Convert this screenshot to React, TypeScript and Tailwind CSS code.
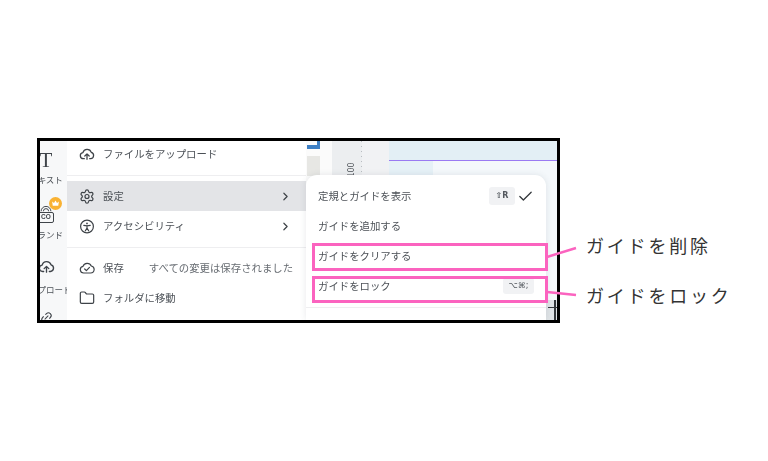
import React from "react";
import { ChevronRight, Check, Folder, Link2, Settings } from "lucide-react";

const CloudUp = ({ className = "" }: { className?: string }) => (
  <svg viewBox="0 0 24 24" className={className} fill="none" stroke="currentColor" strokeWidth={1.9} strokeLinecap="round" strokeLinejoin="round">
    <path d="M8 19H6.500a4.500 4.500 0 0 1-.6-8.960A6.500 6.500 0 0 1 18.400 9.600 4.800 4.800 0 0 1 17.500 19H16" />
    <path d="M12 20v-8M8.700 15 12 11.800l3.300 3.200" />
  </svg>
);

const CloudOk = ({ className = "" }: { className?: string }) => (
  <svg viewBox="0 0 24 24" className={className} fill="none" stroke="currentColor" strokeWidth={1.8} strokeLinecap="round" strokeLinejoin="round">
    <path d="M7 19.500a5 5 0 0 1-1-9.900A6.600 6.600 0 0 1 18.400 9 5.300 5.300 0 0 1 17.500 19.500Z" />
    <path d="m8.500 13.500 2.600 2.500 4.600-5" />
  </svg>
);

const A11y = ({ className = "" }: { className?: string }) => (
  <svg viewBox="0 0 24 24" className={className} fill="none" stroke="currentColor" strokeWidth={1.8} strokeLinecap="round" strokeLinejoin="round">
    <circle cx="12" cy="12" r="9.600" />
    <circle cx="12" cy="7.400" r="1.300" fill="currentColor" stroke="none" />
    <path d="M7.200 10.200c3.200.9 6.400.9 9.600 0M12 10.800v3.400M12 14.200l-2.400 4.200M12 14.200l2.400 4.200" />
  </svg>
);

const Brand = () => (
  <div className="relative flex h-[18px] w-[17px] flex-col items-center justify-end">
    <svg viewBox="0 0 16 7" className="h-[6px] w-[12px] text-[#3f444a]" fill="none" stroke="currentColor" strokeWidth={1.300}>
      <path d="M4.500 6.500a3.500 3.500 0 0 1 7 0" />
      <path d="M1.500 6.500a6.500 6.500 0 0 1 13 0" />
    </svg>
    <span className="flex h-[11px] w-[17px] items-center justify-center rounded-[2px] border border-[#3f444a] font-['Liberation_Sans',sans-serif] text-[6.500px] font-bold leading-none text-[#3f444a]">CO</span>
  </div>
);

const Crown = () => (
  <span className="absolute left-[12px] top-[-8px] flex h-[13px] w-[13px] items-center justify-center rounded-full bg-[#f9b233]">
    <svg viewBox="0 0 12 12" className="h-[9px] w-[9px]" fill="#ffffff">
      <path d="M1.500 3.200 4 5.400 6 2l2 3.400 2.500-2.200-.8 5.800H2.300Z" />
    </svg>
  </span>
);

const Row = ({ icon, label, extra, chevron, active }: { icon: React.ReactNode; label: string; extra?: string; chevron?: boolean; active?: boolean }) => (
  <div className={`flex h-[30px] items-center pl-[12px] pr-[14px] ${active ? "bg-[#e3e4e7]" : ""}`}>
    <span className="flex w-[16px] items-center justify-center text-[#3e4348]">{icon}</span>
    <span className="ml-[8px] whitespace-nowrap text-[10.400px] text-[#4b5056]">{label}</span>
    {extra && <span className="ml-[25px] whitespace-nowrap text-[10.400px] text-[#676c72]">{extra}</span>}
    {chevron && <ChevronRight className="ml-auto h-[13px] w-[13px] text-[#3e4348]" strokeWidth={2.200} />}
  </div>
);

const Kbd = ({ children, className = "" }: { children: React.ReactNode; className?: string }) => (
  <span className={`flex items-center justify-center rounded-[3px] bg-[#f1f2f4] font-['DejaVu_Sans',sans-serif] text-[8px] text-[#53585e] ${className}`}>{children}</span>
);

const SubRow = ({ label, children }: { label: string; children?: React.ReactNode }) => (
  <div className="flex h-[30px] items-center pl-[12px] pr-[12px]">
    <span className="whitespace-nowrap text-[10.400px] text-[#4b5056]">{label}</span>
    {children}
  </div>
);

const SideItem = ({ icon, label, labelGap }: { icon: React.ReactNode; label: string; labelGap: string }) => (
  <div className="flex flex-col items-center">
    <div className="relative flex h-[22px] items-center justify-center">{icon}</div>
    <span className={`${labelGap} whitespace-nowrap text-[8.500px] leading-[12px] text-[#4d5258]`}>{label}</span>
  </div>
);

export default function App() {
  return (
    <div className="relative h-[461px] w-[768px] overflow-hidden bg-white pl-[37px] pt-[138px] font-['Noto_Sans_CJK_JP','Liberation_Sans',sans-serif]">
      <div className="flex h-[185px] w-[523px] overflow-hidden border-[3px] border-black bg-white blur-[0.5px]">
        {/* left rail */}
        <div className="w-[27px] shrink-0 overflow-hidden bg-[#f7f8f9]">
          <div className="ml-[-14px] flex w-[40px] flex-col items-center pt-[8px] text-[#3f444a]">
            <SideItem labelGap="mt-[2px]" icon={<span className="font-['Liberation_Serif',serif] text-[21px] leading-none">T</span>} label="テキスト" />
            <div className="mt-[15px]">
              <SideItem labelGap="mt-[6px]" icon={<div className="relative mt-[6px]"><Brand /><Crown /></div>} label="ブランド" />
            </div>
            <div className="mt-[15px]">
              <SideItem labelGap="mt-[6px]" icon={<CloudUp className="h-[17px] w-[17px]" />} label="アップロード" />
            </div>
            <Link2 className="mt-[16px] h-[13px] w-[13px] -rotate-45" />
          </div>
        </div>

        {/* main menu */}
        <div className="mt-[-2px] w-[239px] shrink-0 bg-white">
          <Row icon={<CloudUp className="h-[18px] w-[18px]" />} label="ファイルをアップロード" />
          <div className="mt-[6px] h-px bg-[#eeeef0]" />
          <div className="mt-[5px]">
            <Row active chevron icon={<Settings className="h-[17px] w-[17px]" strokeWidth={1.800} />} label="設定" />
            <Row chevron icon={<A11y className="h-[17px] w-[17px]" />} label="アクセシビリティ" />
          </div>
          <div className="mt-[6px] h-px bg-[#eeeef0]" />
          <div className="mt-[5px]">
            <Row icon={<CloudOk className="h-[18px] w-[18px]" />} label="保存" extra="すべての変更は保存されました" />
            <Row icon={<Folder className="h-[16px] w-[16px]" strokeWidth={1.800} />} label="フォルダに移動" />
          </div>
        </div>

        {/* canvas behind the submenu */}
        <div className="relative flex min-w-0 flex-1">
          <div className="w-[26px] shrink-0 bg-[#fbfbfb] pl-px">
            <div className="h-[8px] w-[13px] border-b-[4px] border-r-[3px] border-[#3d7fc4]" />
            <div className="mt-[7px] h-[20px] w-[13px] bg-[#e7e7e4]" />
          </div>
          <div className="flex w-[57px] shrink-0 bg-[#eceef0]">
            <div className="flex h-[34px] w-[29px] items-end justify-end pr-[4px]">
              <span className="mr-[-1px] -rotate-90 text-[9px] leading-[10px] text-[#4a4f55]">100</span>
            </div>
            <div className="h-[34px] w-px bg-[repeating-linear-gradient(to_bottom,#b9bcc1_0,#b9bcc1_1px,transparent_1px,transparent_5px)]" />
            <div className="flex-1 bg-[#f1f2f4]" />
          </div>
          <div className="flex min-w-0 flex-1 flex-col">
            <div className="h-[19px] bg-[#e3eff5]" />
            <div className="h-px bg-[#9a7af2]" />
            <div className="flex flex-1">
              <div className="w-[44px] bg-[#e6f1f7]" />
              <div className="flex-1 bg-[#f4f8fb]" />
            </div>
          </div>

          {/* plus cursor in the corner */}
          <div className="absolute bottom-0 right-0 h-[20px] w-[11px] bg-[#dfe3e6]">
            <div className="absolute left-[2px] top-[7px] h-px w-[9px] bg-[#33373b]" />
            <div className="absolute left-[8px] top-0 h-[20px] w-[2px] bg-[#33373b]" />
          </div>

          {/* submenu */}
          <div className="absolute bottom-0 left-0 right-[11px] top-[34px] rounded-t-[11px] bg-white pt-[6px] shadow-[0_0_6px_rgba(60,70,80,0.12)]">
            <SubRow label="定規とガイドを表示">
              <Kbd className="ml-auto h-[18px] w-[26px] font-bold">⇧R</Kbd>
              <Check className="ml-[2px] h-[17px] w-[17px] text-[#33373b]" strokeWidth={1.800} />
            </SubRow>
            <SubRow label="ガイドを追加する" />
            <SubRow label="ガイドをクリアする" />
            <SubRow label="ガイドをロック">
              <Kbd className="ml-auto h-[16px] w-[31px]">⌥⌘;</Kbd>
            </SubRow>
            <div className="mt-[6px] h-px bg-[#eeeef0]" />
          </div>
        </div>
      </div>

      {/* annotations */}
      <div className="absolute left-[312px] top-[243px] h-[28px] w-[236px] border-[3px] border-[#fb63bf]" />
      <div className="absolute left-[312px] top-[276px] h-[27px] w-[236px] border-[3px] border-[#fb63bf]" />
      <svg className="absolute left-[545px] top-[240px] h-[64px] w-[36px]" viewBox="0 0 36 64" fill="none" stroke="#fb63bf" strokeWidth={2.400}>
        <path d="M2 17 31 8M2 52 31 55" />
      </svg>
      <div className="absolute left-[586px] top-[231px] whitespace-nowrap text-[18px] leading-[28px] tracking-[2.800px] text-[#333333]">ガイドを削除</div>
      <div className="absolute left-[586px] top-[281px] whitespace-nowrap text-[18px] leading-[28px] tracking-[2.800px] text-[#333333]">ガイドをロック</div>
    </div>
  );
}
